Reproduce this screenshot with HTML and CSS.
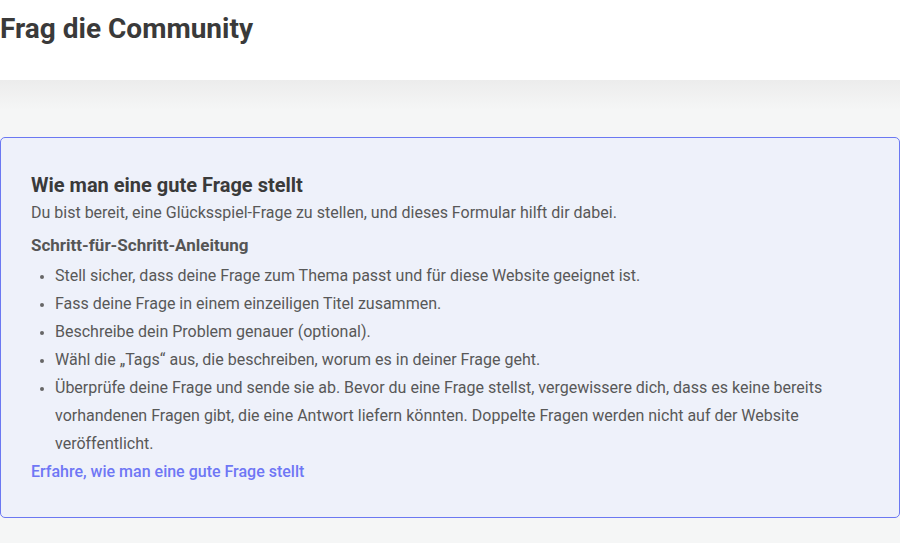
FILE: index.html
```html
<!DOCTYPE html>
<html lang="de">
<head>
    <meta charset="UTF-8">
    <meta name="viewport" content="width=device-width, initial-scale=1.0">
    <title>Frag die Community</title>
    <link rel="stylesheet" href="styles.css">
</head>
<body>
    <header class="page-head">
        <h1>Frag die Community</h1>
    </header>

    <main class="page-main">
        <div class="howto">
            <h2>Wie man eine gute Frage stellt</h2>
            <p class="intro">Du bist bereit, eine Glücksspiel-Frage zu stellen, und dieses Formular hilft dir dabei.</p>
            <h3>Schritt-für-Schritt-Anleitung</h3>
            <ul class="steps">
                <li>Stell sicher, dass deine Frage zum Thema passt und für diese Website geeignet ist.</li>
                <li>Fass deine Frage in einem einzeiligen Titel zusammen.</li>
                <li>Beschreibe dein Problem genauer (optional).</li>
                <li>Wähl die „Tags“ aus, die beschreiben, worum es in deiner Frage geht.</li>
                <li>Überprüfe deine Frage und sende sie ab. Bevor du eine Frage stellst, vergewissere dich, dass es keine bereits vorhandenen Fragen gibt, die eine Antwort liefern könnten. Doppelte Fragen werden nicht auf der Website veröffentlicht.</li>
            </ul>
            <a href="#" class="more">Erfahre, wie man eine gute Frage stellt</a>
        </div>
    </main>
</body>
</html>
```

FILE: styles.css
```css
body{
    margin: 0;
    font-family: Roboto, "Liberation Sans", Arial, sans-serif;
    background-color: #f5f6f6;
    color: #585858;
}
.page-head{
    background-color: #fff;
    height: 80px;
}
.page-head h1{
    margin: 0;
    padding-top: 12px;
    font-size: 28px;
    line-height: 34px;
    font-weight: 700;
    color: #3a3a3a;
}
.page-main{
    padding-top: 57px;
    padding-bottom: 25px;
    background: linear-gradient(#ececec, #f5f6f6 30px);
}
.howto{
    background-color: #eef1fa;
    border: 1px solid #6b78f2;
    border-radius: 5px;
    padding: 34px 30px 31px 30px;
}
.howto h2{
    margin: 0;
    font-size: 20px;
    line-height: 26px;
    font-weight: 700;
    color: #3a3a3a;
}
.intro{
    margin: 0;
    font-size: 16px;
    line-height: 30px;
}
.howto h3{
    margin: 4px 0 0 0;
    font-size: 17px;
    line-height: 26px;
    font-weight: 700;
    color: #555;
}
.steps{
    margin: 4px 0 0 0;
    padding-left: 24px;
    font-size: 16px;
    line-height: 28px;
    list-style: none;
}
.steps li::before{
    content: "";
    display: inline-block;
    width: 4px;
    height: 4px;
    border-radius: 50%;
    background-color: #666;
    margin-left: -15px;
    margin-right: 11px;
    vertical-align: middle;
}
.more{
    display: block;
    font-size: 16px;
    line-height: 28px;
    font-weight: 500;
    color: #6f77f5;
    text-decoration: none;
}
```
